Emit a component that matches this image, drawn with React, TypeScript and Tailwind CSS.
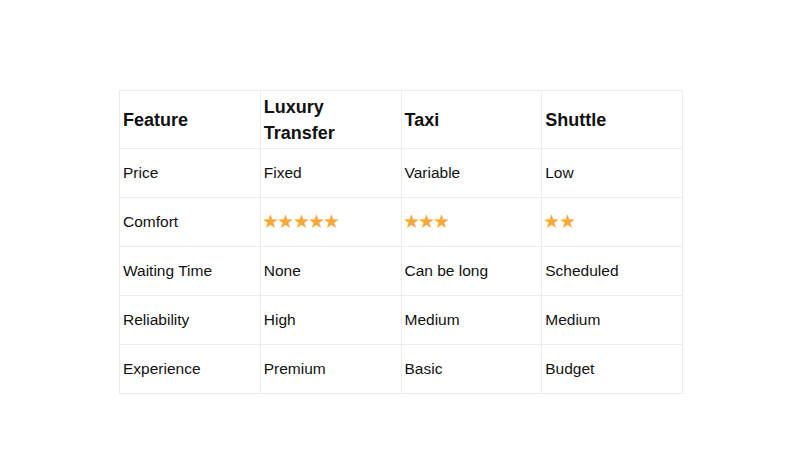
import React from "react";

const rows: [string, string, string, string][] = [
  ["Price", "Fixed", "Variable", "Low"],
  ["Comfort", "★★★★★", "★★★", "★★"],
  ["Waiting Time", "None", "Can be long", "Scheduled"],
  ["Reliability", "High", "Medium", "Medium"],
  ["Experience", "Premium", "Basic", "Budget"],
];

export default function App() {
  return (
    <div
      className="w-[800px] h-[450px] bg-white pt-[90px] pl-[119px]"
      style={{ fontFamily: '"Liberation Sans", Arial, sans-serif' }}
    >
      <table className="border-collapse table-fixed w-[563px] text-[#111]">
        <colgroup>
          <col className="w-[140.75px]" />
          <col className="w-[140.75px]" />
          <col className="w-[140.75px]" />
          <col className="w-[140.75px]" />
        </colgroup>
        <thead>
          <tr className="h-[58px]">
            {["Feature", "Luxury Transfer", "Taxi", "Shuttle"].map((h) => (
              <th
                key={h}
                className="border border-[#ececec] pl-[3px] pr-[4px] text-left align-middle text-[18px] font-bold leading-[26px]"
              >
                {h}
              </th>
            ))}
          </tr>
        </thead>
        <tbody>
          {rows.map((r) => (
            <tr key={r[0]} className="h-[49px]">
              {r.map((c, i) => (
                <td
                  key={i}
                  className={
                    "border border-[#ececec] pl-[3px] pr-[4px] align-middle " +
                    (c.startsWith("★")
                      ? "text-[19px] text-[#f7a836] tracking-[-1.6px]"
                      : "text-[15.5px]")
                  }
                >
                  {c.startsWith("★") ? (
                    <span className="ml-[-2px]">{c}</span>
                  ) : (
                    c
                  )}
                </td>
              ))}
            </tr>
          ))}
        </tbody>
      </table>
    </div>
  );
}
